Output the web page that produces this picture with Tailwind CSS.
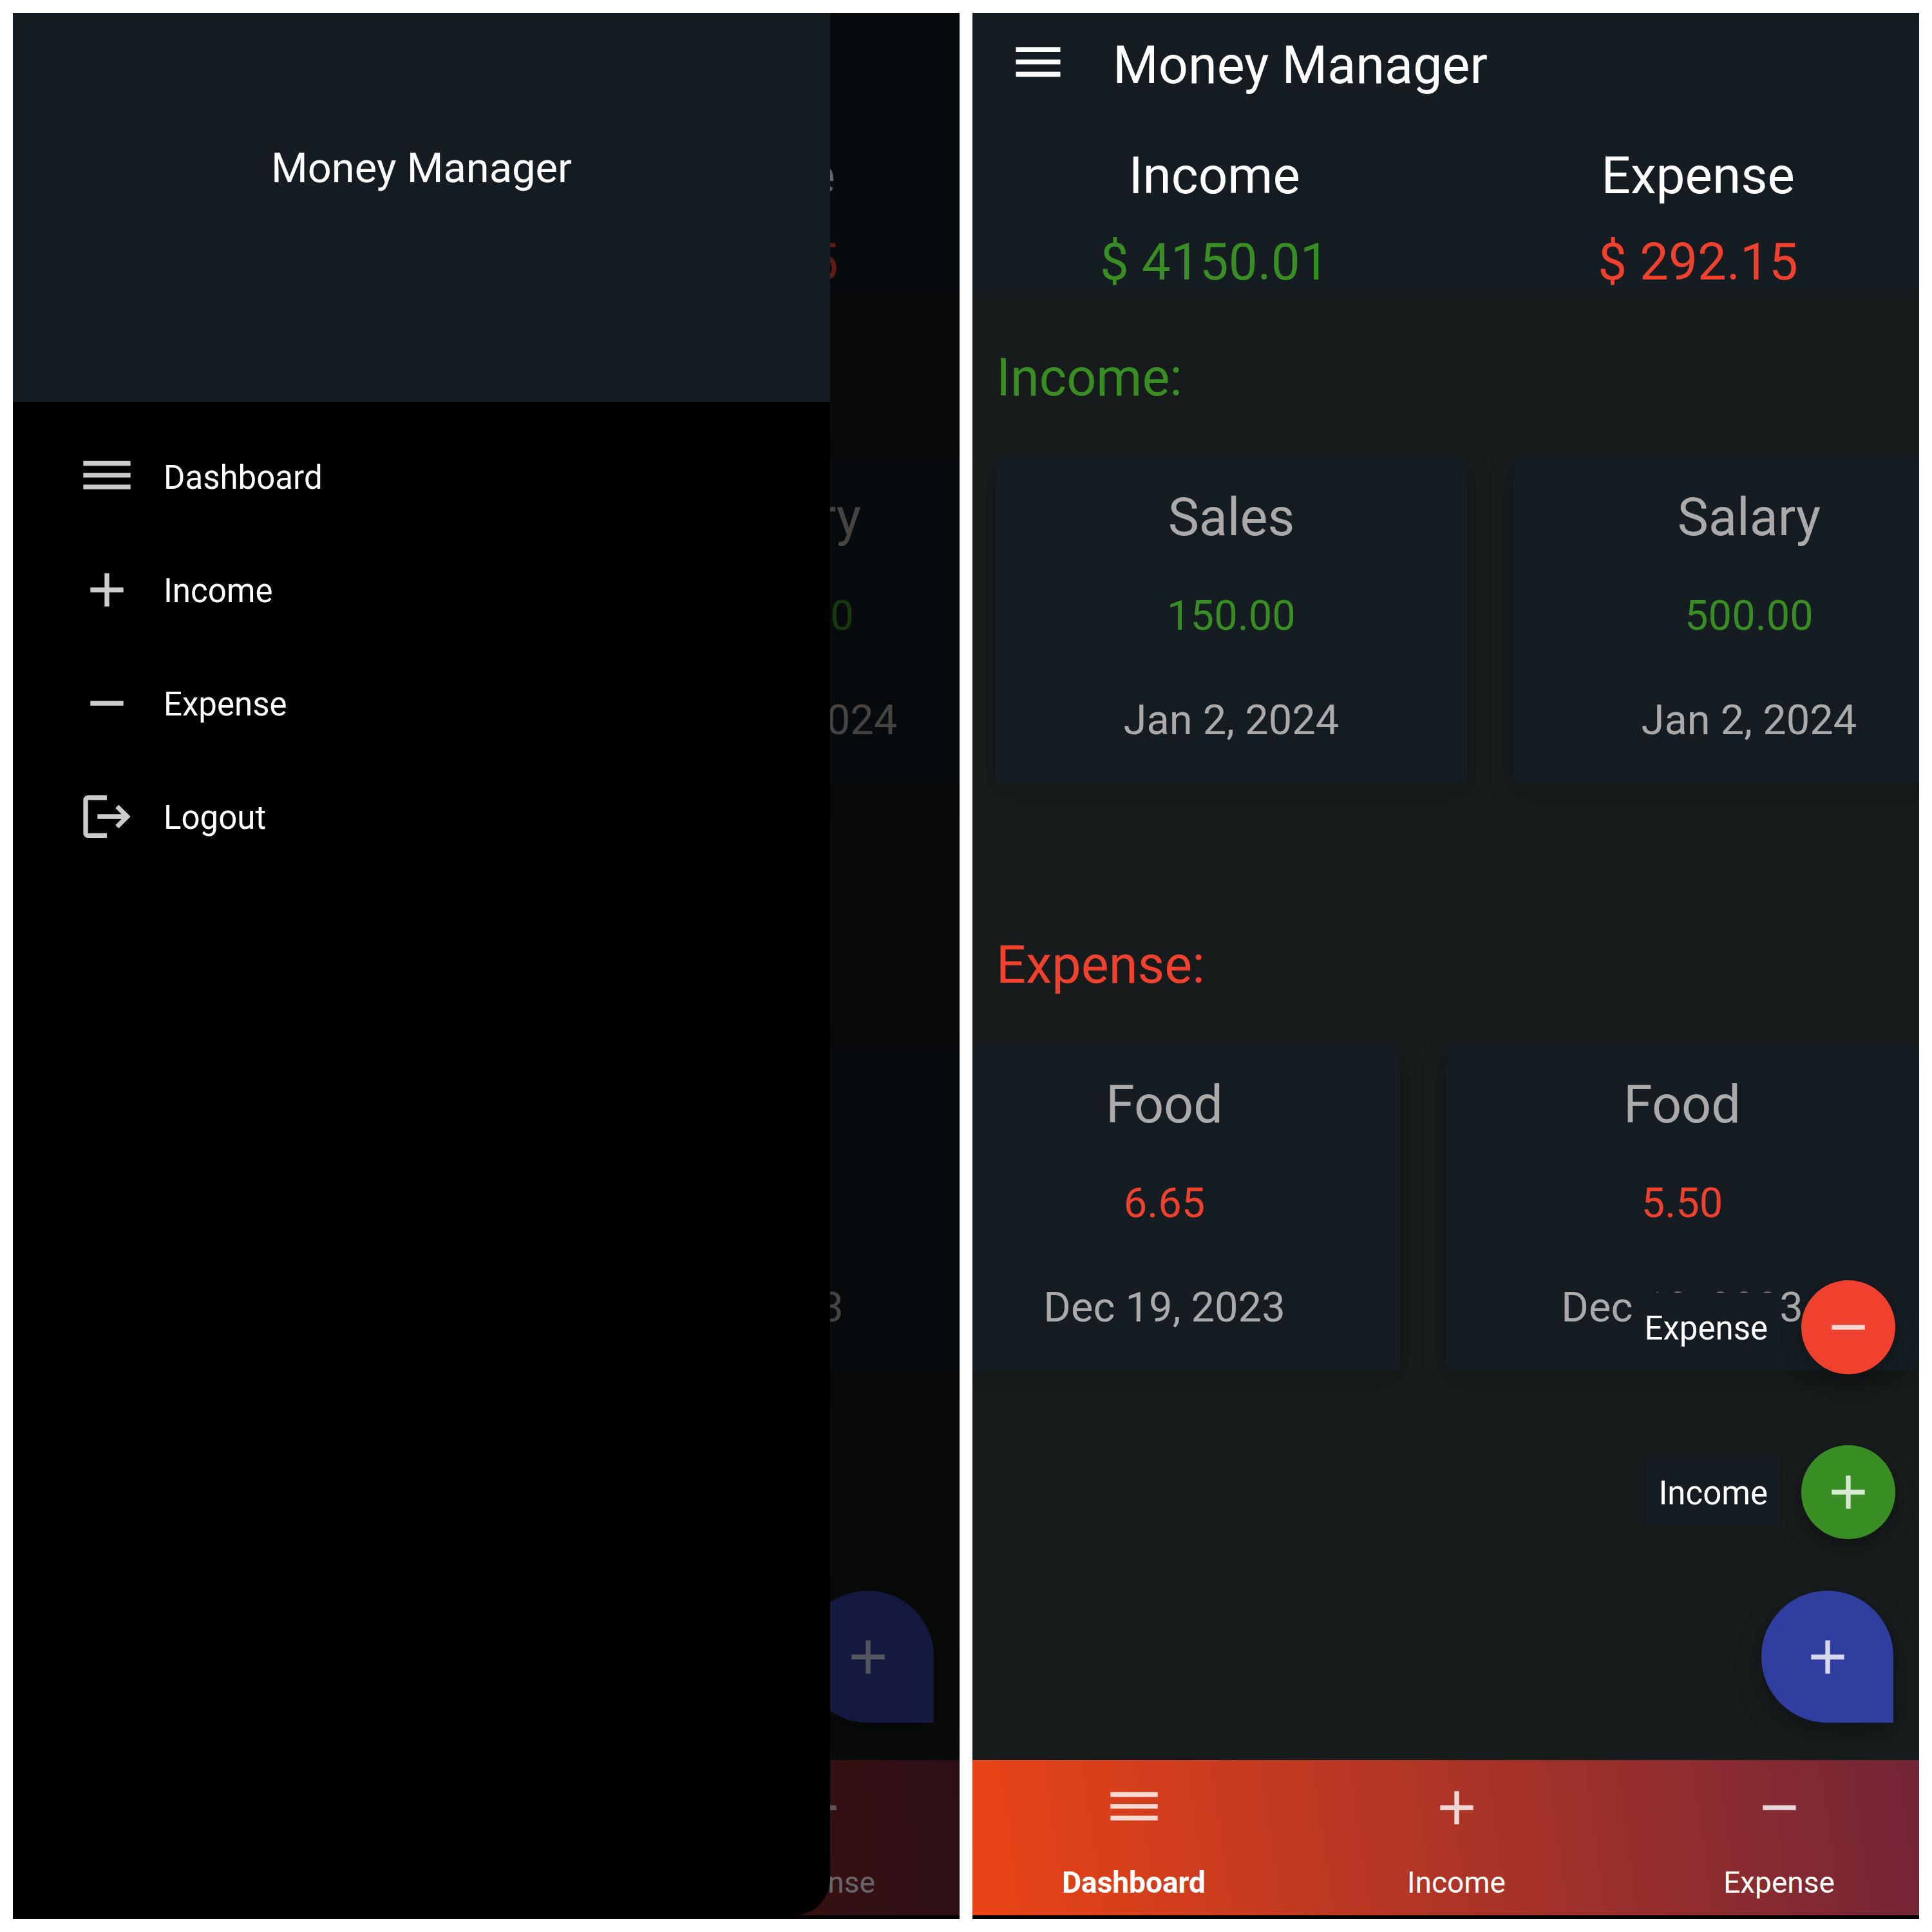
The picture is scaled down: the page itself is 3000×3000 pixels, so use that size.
<!DOCTYPE html>
<html lang="en">
<head>
<meta charset="utf-8">
<meta name="viewport" content="width=device-width, initial-scale=1">
<title>Money Manager</title>
<script src="https://cdn.jsdelivr.net/npm/@tailwindcss/browser@4"></script>
</head>
<body class="bg-white font-[Roboto,sans-serif]">

<svg class="hidden" aria-hidden="true">
  <symbol id="menu" viewBox="0 0 24 24"><path d="M3 4.5h18v2H3zM3 9.5h18v2H3zM3 14.5h18v2H3z"/></symbol>
  <symbol id="reorder" viewBox="0 0 24 24"><path d="M2 5.4h20v2H2zM2 10.4h20v2H2zM2 15.4h20v2H2z"/></symbol>
  <symbol id="plus" viewBox="0 0 24 24"><path d="M5 11h6V5h2v6h6v2h-6v6h-2v-6H5z"/></symbol>
  <symbol id="minus" viewBox="0 0 24 24"><path d="M5 11h14v2H5z"/></symbol>
  <symbol id="logout" viewBox="0 0 24 24"><path d="M17 7l-1.41 1.41L18.17 11H8v2h10.17l-2.58 2.58L17 17l5-5zM4 5h8V3H4c-1.1 0-2 .9-2 2v14c0 1.1.9 2 2 2h8v-2H4z"/></symbol>
</svg>

<!-- Dashboard shared by both phone screens -->
<template id="dashboard">
  <header class="flex h-[195px] items-start bg-[#151d22] text-white">
    <div class="flex h-[164px] items-center gap-[70px] pl-14">
      <button type="button" aria-label="Open menu"><svg class="size-[92px] fill-current"><use href="#menu"/></svg></button>
      <h1 class="text-[81px] leading-[96px]">Money Manager</h1>
    </div>
  </header>
  <section class="flex justify-between bg-[#151d22] pt-2.5 pr-[188px] pl-[198px] text-center text-[80px] leading-[96px]">
    <div class="flex flex-col gap-[38px]"><h2 class="text-white">Income</h2><p class="text-[#388e22]">$ 4150.01</p></div>
    <div class="flex flex-col gap-[38px]"><h2 class="text-white">Expense</h2><p class="text-[#ef412e]">$ 292.15</p></div>
  </section>
  <main class="grow">
    <section class="pt-[84px] pb-[150px]">
      <h2 class="pl-[37px] text-[81px] leading-[96px] text-[#388e22]">Income:</h2>
      <div class="mt-[75px] flex gap-[72px] pl-[36px]">
        <article class="w-[732px] shrink-0 rounded-lg bg-[#151d22] pt-[46px] pb-[60px] text-center text-[65px] leading-[78px] text-[#aaaaaa] shadow-[0_14px_40px_rgba(0,0,0,0.18)]">
          <h3 class="text-[81px] leading-[96px]">Sales</h3><p class="mt-[65px] text-[#388e22]">150.00</p><p class="mt-[84px]">Jan 2, 2024</p>
        </article>
        <article class="w-[732px] shrink-0 rounded-lg bg-[#151d22] pt-[46px] pb-[60px] text-center text-[65px] leading-[78px] text-[#aaaaaa] shadow-[0_14px_40px_rgba(0,0,0,0.18)]">
          <h3 class="text-[81px] leading-[96px]">Salary</h3><p class="mt-[65px] text-[#388e22]">500.00</p><p class="mt-[84px]">Jan 2, 2024</p>
        </article>
      </div>
    </section>
    <section class="pt-[84px] pb-[150px]">
      <h2 class="pl-[37px] text-[81px] leading-[96px] text-[#ef412e]">Expense:</h2>
      <div class="mt-[75px] flex justify-end gap-[72px] pr-0.5">
        <article class="w-[732px] shrink-0 rounded-lg bg-[#151d22] pt-[46px] pb-[60px] text-center text-[65px] leading-[78px] text-[#aaaaaa] shadow-[0_14px_40px_rgba(0,0,0,0.18)]">
          <h3 class="text-[81px] leading-[96px]">Food</h3><p class="mt-[65px] text-[#ef412e]">6.65</p><p class="mt-[84px]">Dec 19, 2023</p>
        </article>
        <article class="w-[732px] shrink-0 rounded-lg bg-[#151d22] pt-[46px] pb-[60px] text-center text-[65px] leading-[78px] text-[#aaaaaa] shadow-[0_14px_40px_rgba(0,0,0,0.18)]">
          <h3 class="text-[81px] leading-[96px]">Food</h3><p class="mt-[65px] text-[#ef412e]">5.50</p><p class="mt-[84px]">Dec 19, 2023</p>
        </article>
      </div>
    </section>
  </main>
  <nav class="flex border-b-[6px] border-black bg-linear-[82deg,#ea4416,#722536] text-[46px] leading-[54px] text-white">
    <a href="#" class="flex w-[501px] shrink-0 flex-col items-center gap-[45px] pt-[30px] pb-6 font-bold"><svg class="size-[88px] fill-white/80"><use href="#reorder"/></svg>Dashboard</a>
    <a href="#" class="flex w-[501px] shrink-0 flex-col items-center gap-[45px] pt-[30px] pb-6"><svg class="size-[88px] fill-white/80"><use href="#plus"/></svg>Income</a>
    <a href="#" class="flex w-[501px] shrink-0 flex-col items-center gap-[45px] pt-[30px] pb-6"><svg class="size-[88px] fill-white/80"><use href="#minus"/></svg>Expense</a>
  </nav>
  <div class="absolute right-[37px] bottom-[305px] flex flex-col items-end">
    <div data-actions class="mb-20 flex flex-col items-end gap-[110px] text-[51px] leading-[60px] text-white">
      <div class="flex items-center gap-[34px]">
        <label for="add-expense" class="bg-[#151d22] px-[18px] pt-[26px] pb-[22px]">Expense</label>
        <button id="add-expense" type="button" class="flex size-[146px] items-center justify-center rounded-full bg-[#ef412e] shadow-[0_12px_32px_rgba(0,0,0,0.25)]"><svg class="size-[88px] fill-white/80"><use href="#minus"/></svg></button>
      </div>
      <div class="flex items-center gap-[34px]">
        <label for="add-income" class="bg-[#151d22] px-[18px] pt-[26px] pb-[22px]">Income</label>
        <button id="add-income" type="button" class="flex size-[146px] items-center justify-center rounded-full bg-[#388e22] shadow-[0_12px_32px_rgba(0,0,0,0.25)]"><svg class="size-[88px] fill-white/80"><use href="#plus"/></svg></button>
      </div>
    </div>
    <button type="button" aria-label="Add" class="mr-[3px] flex size-[205px] items-center justify-center rounded-full rounded-br-none bg-[#303f9f] shadow-[0_14px_40px_rgba(0,0,0,0.25)]"><svg class="size-[88px] fill-white/80"><use href="#plus"/></svg></button>
  </div>
</template>

<div class="grid min-h-screen grid-cols-2 gap-5 p-5">
  <div class="relative flex flex-col overflow-hidden bg-[#171b1b]">
    <div id="closed-menu" class="flex grow flex-col" inert></div>
    <div class="absolute inset-0 bg-black/60"></div>
    <aside class="absolute top-0 bottom-1.5 left-0 w-[1269px] max-w-full overflow-hidden rounded-br-[56px] bg-black text-white">
      <div class="h-[604px] bg-[#151d22] pt-[202px] text-center text-[65px] leading-[78px]">Money Manager</div>
      <nav class="flex flex-col pt-7 text-[51px] leading-[60px]">
        <a href="#" class="flex h-44 items-center gap-11 pl-[102px]"><svg class="size-[88px] fill-white/80"><use href="#reorder"/></svg><span class="pt-1">Dashboard</span></a>
        <a href="#" class="flex h-44 items-center gap-11 pl-[102px]"><svg class="size-[88px] fill-white/80"><use href="#plus"/></svg><span class="pt-1">Income</span></a>
        <a href="#" class="flex h-44 items-center gap-11 pl-[102px]"><svg class="size-[88px] fill-white/80"><use href="#minus"/></svg><span class="pt-1">Expense</span></a>
        <a href="#" class="flex h-44 items-center gap-11 pl-[102px]"><svg class="size-[88px] fill-white/80"><use href="#logout"/></svg><span class="pt-1">Logout</span></a>
      </nav>
    </aside>
  </div>
  <div id="open-menu" class="relative flex flex-col overflow-hidden bg-[#171b1b]"></div>
</div>

<script>
  const source = document.getElementById('dashboard').content;
  const behindDrawer = source.cloneNode(true);
  // The quick actions are collapsed while the drawer is open
  behindDrawer.querySelector('[data-actions]').remove();
  document.getElementById('closed-menu').append(behindDrawer);
  document.getElementById('open-menu').append(source.cloneNode(true));
</script>
</body>
</html>
